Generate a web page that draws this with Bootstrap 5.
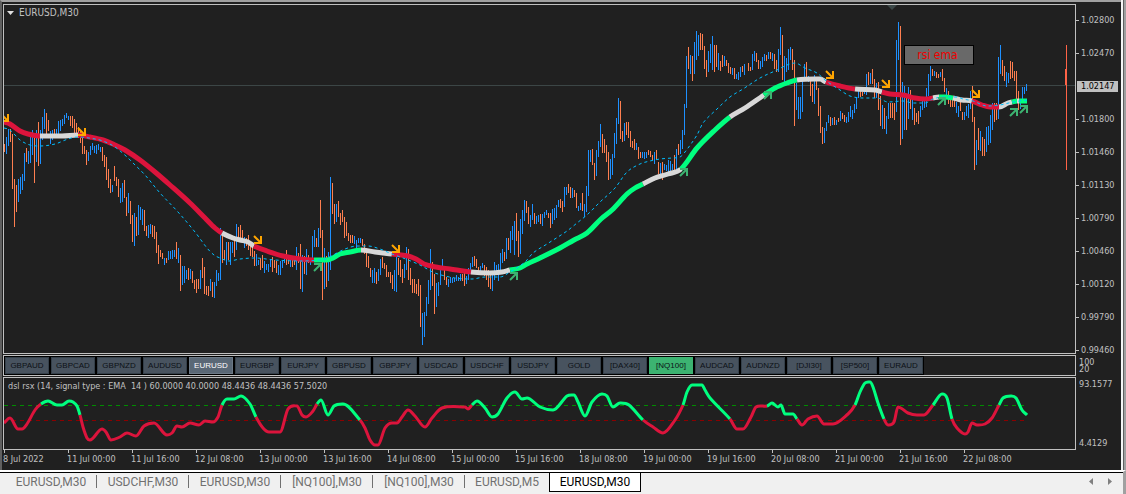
<!DOCTYPE html>
<html lang="en">
<head>
<meta charset="utf-8">
<meta name="viewport" content="width=device-width, initial-scale=1">
<title>EURUSD,M30</title>
<link href="https://cdn.jsdelivr.net/npm/bootstrap@5.3.0/dist/css/bootstrap.min.css" rel="stylesheet">
<style>
:root{--ink:#202020;--rule:#c0c0c0;--chrome:#a0a0a0}
body{background:#f0f0f0;font-family:"DejaVu Sans Condensed","DejaVu Sans",sans-serif;font-size:9px;line-height:11px;color:var(--rule)}
.workspace{min-width:0;background:var(--ink);border-top:2px solid var(--chrome);border-left:2px solid #606060;padding:2px 0 0 1px}
.edge{width:5px;background:linear-gradient(90deg,#f6f6f6 2px,#606060 2px,#606060 3px,var(--chrome) 3px)}
.pane{border:1px solid var(--rule);min-width:0}
.chart{display:block;width:100%}
.pane-main .chart{height:348px}
.pane-rsi .chart{height:71px}
.mt-line{margin-top:1px}
.scale{width:45px;flex:none}
.pane-title{top:2px;left:3px;gap:5px;font-size:10px}
.pane-note{top:3px;left:4px;white-space:pre}
.caret{width:7px;height:4px;flex:none}
.prices{padding-top:11px;margin:0 0 -2px}
.prices li{height:11px;padding-left:5px;background:linear-gradient(var(--rule),var(--rule)) 0 5px/3px 1px no-repeat}
.prices li.now{background:var(--rule);color:#000;margin-left:1px;margin-right:3px;padding-left:4px}
.pairs-pane{height:21px}
.pairs{background:#000;padding:1px;gap:2px}
.btn-pair{width:44px;height:17px;padding:0;border:1px solid #35404a;border-radius:0;background:#48535f;color:#0c1116;font:8px/14px "Liberation Sans",Arial,sans-serif}
.btn-pair.on{background:#5a6876;border-color:#6c7986;color:#fff}
.btn-pair.hot{background:#3cb371;border-color:#3cb371;color:#0c1116}
.btn-note{top:40px;right:101px;width:70px;height:20px;padding:0 3px 0 0;border:1px solid #000;border-radius:0;background:#696969;color:#f00000;font-size:12px;line-height:18px}
.small-scale{line-height:7px;padding:4px 0 0 3px}
.rsi-scale{padding:2px 0 1px 3px}
.times{display:grid;grid-template-columns:repeat(16,5.965%);height:20px;margin-right:45px}
.times span{white-space:nowrap;padding-top:4px;background:linear-gradient(var(--rule),var(--rule)) 1px 0/1px 3px no-repeat}
.tabwrap{border-top:2px solid #fff;border-right:3px solid var(--chrome)}
.tabbar{border-top:1px solid #000;height:22px;padding-left:5px;font-family:Roboto,"Open Sans",sans-serif;font-size:12px;line-height:18px}
.tab-chart{width:92px;height:19px;text-align:center;color:#707070;background:linear-gradient(#707070,#707070) 100% 2px/1px 13px no-repeat;text-decoration:none}
.tab-short{width:84px;background:none}
.tab-chart.on{background:#fff;color:#000;border:solid #000;border-width:0 1px 1px}
.tab-step{width:19px;height:17px;padding:0;border:0;background:none;line-height:0}
</style>
</head>
<body class="min-vh-100 d-flex flex-column">
<div class="d-flex">
  <main class="workspace flex-grow-1 d-flex flex-column">
    <div class="d-flex">
      <section class="pane pane-main flex-grow-1 position-relative">
        <svg id="priceChart" class="chart" viewBox="4 5 1071 348" preserveAspectRatio="none" role="img" aria-label="EURUSD price chart">
          <path d="M4 85.5H1075" stroke="#3c4646"/>
          <path d="M887 5h10l-5 5z" fill="#3c4848"/>
        </svg>
        <div class="pane-title position-absolute d-flex align-items-center">
          <svg class="caret" viewBox="0 0 7 4" aria-hidden="true"><path d="M0 0h7L3.5 4z" fill="#e0e0e0"/></svg>
          <span>EURUSD,M30</span>
        </div>
        <button type="button" class="btn btn-note position-absolute">rsi ema</button>
      </section>
      <ul class="scale prices list-unstyled d-flex flex-column justify-content-between">
        <li>1.02800</li><li>1.02470</li><li class="now">1.02147</li><li>1.01800</li><li>1.01460</li><li>1.01130</li><li>1.00790</li><li>1.00460</li><li>1.00120</li><li>0.99790</li><li>0.99460</li>
      </ul>
    </div>
    <div class="d-flex mt-line">
      <div class="pane pairs-pane flex-grow-1 d-flex">
        <div class="pairs d-flex" role="group" aria-label="Symbols">
          <button type="button" class="btn btn-pair">GBPAUD</button><button type="button" class="btn btn-pair">GBPCAD</button><button type="button" class="btn btn-pair">GBPNZD</button><button type="button" class="btn btn-pair">AUDUSD</button><button type="button" class="btn btn-pair on">EURUSD</button><button type="button" class="btn btn-pair">EURGBP</button><button type="button" class="btn btn-pair">EURJPY</button><button type="button" class="btn btn-pair">GBPUSD</button><button type="button" class="btn btn-pair">GBPJPY</button><button type="button" class="btn btn-pair">USDCAD</button><button type="button" class="btn btn-pair">USDCHF</button><button type="button" class="btn btn-pair">USDJPY</button><button type="button" class="btn btn-pair">GOLD</button><button type="button" class="btn btn-pair">[DAX40]</button><button type="button" class="btn btn-pair hot">[NQ100]</button><button type="button" class="btn btn-pair">AUDCAD</button><button type="button" class="btn btn-pair">AUDNZD</button><button type="button" class="btn btn-pair">[DJI30]</button><button type="button" class="btn btn-pair">[SP500]</button><button type="button" class="btn btn-pair">EURAUD</button>
        </div>
      </div>
      <div class="scale small-scale"><div>100</div><div>20</div></div>
    </div>
    <div class="d-flex mt-line">
      <section class="pane pane-rsi flex-grow-1 position-relative">
        <svg id="rsiChart" class="chart" viewBox="4 378 1071 71" preserveAspectRatio="none" role="img" aria-label="dsl rsx indicator">
          <path d="M4 405.5H1027" stroke="#008c00" stroke-dasharray="4 4"/>
          <path d="M4 420.5H1027" stroke="#8b0000" stroke-dasharray="4 4"/>
        </svg>
        <div class="pane-note position-absolute">dsl rsx (14, signal type : EMA  14 ) 60.0000 40.0000 48.4436 48.4436 57.5020</div>
      </section>
      <div class="scale rsi-scale d-flex flex-column justify-content-between"><span>93.1577</span><span>4.4129</span></div>
    </div>
    <div class="times">
      <span>8 Jul 2022</span><span>11 Jul 00:00</span><span>11 Jul 16:00</span><span>12 Jul 08:00</span><span>13 Jul 00:00</span><span>13 Jul 16:00</span><span>14 Jul 08:00</span><span>15 Jul 00:00</span><span>15 Jul 16:00</span><span>18 Jul 08:00</span><span>19 Jul 00:00</span><span>19 Jul 16:00</span><span>20 Jul 08:00</span><span>21 Jul 00:00</span><span>21 Jul 16:00</span><span>22 Jul 08:00</span>
    </div>
  </main>
  <div class="edge flex-shrink-0"></div>
</div>
<div class="tabwrap flex-grow-1">
  <nav class="tabbar d-flex" aria-label="Open charts">
    <a href="#" class="tab-chart">EURUSD,M30</a><a href="#" class="tab-chart">USDCHF,M30</a><a href="#" class="tab-chart">EURUSD,M30</a><a href="#" class="tab-chart">[NQ100],M30</a><a href="#" class="tab-chart">[NQ100],M30</a><a href="#" class="tab-chart tab-short">EURUSD,M5</a><a href="#" class="tab-chart on" aria-current="page">EURUSD,M30</a>
    <div class="ms-auto d-flex">
      <button type="button" class="tab-step" aria-label="Previous charts"><svg width="4" height="7" viewBox="0 0 4 7"><path d="M4 0v7L0 3.5z" fill="#808080"/></svg></button>
      <button type="button" class="tab-step me-1" aria-label="Next charts"><svg width="4" height="7" viewBox="0 0 4 7"><path d="M0 0v7l4-3.5z" fill="#808080"/></svg></button>
    </div>
  </nav>
</div>
<script src="https://cdn.jsdelivr.net/npm/bootstrap@5.3.0/dist/js/bootstrap.bundle.min.js"></script>
<script>
// Price bars, two pixels apart, in runs: start x, then direction (b up, o down) with high-low.
const runs = {
 4:"o144-152 b137-154 b129-146 o129-142 o134-189 o179-227 o185-212 b179-202 b177-194 b174-190 b153-181 o148-162 b151-164 b135-163 b130-155 o137-183 b130-162 o122-166 b130-164 b117-140 b109-129 o113-134 o120-131 b131-144 b130-140 o129-136 b129-134 b121-136 b120-131 b119-126 b115-124 b113-118 b116-120 o116-126 o116-128 o119-133 o123-134 o127-138 o131-143 o138-154 o146-154 o150-165 b152-161 b146-155 b143-150 b146-153 b145-154 b144-150 b147-152 o147-161 o155-167 o157-180 o169-188 o179-193 b185-192 o166-181 o177-186 o179-197",
 120:"b188-203 b183-202 o180-198 o197-216 b193-213 o201-224 o215-242 b213-246 o217-236 b205-235 b207-220 b209-225 o210-231 o226-236 b225-238 b224-234 o225-237 o226-239 o232-253 o245-264 o250-257 o253-259 b258-265 o258-263 b251-260 b251-259 b250-259 b250-257 o242-259 b248-263 o255-291 b266-285 b266-283 b270-279 o268-280 b269-279 o271-283 o280-289 o279-293 o279-289",
 200:"b270-289 o258-278 o267-294 o286-295 o286-296 b279-291 o282-297 b282-298 b270-286 b273-281 b228-280 o235-263 o250-260 b242-265 o242-260 b242-265 b242-253 o236-257 b224-250 o227-238 o225-240 o230-238 b237-248 o238-246 o235-250 o243-256 o247-257 o251-266 b254-266 b260-265 o258-270 o255-268 b261-273 b264-270 b264-272 b259-267 o257-272 o260-268 o261-273 b265-275 b261-275 b261-268 b258-263 o250-265 o258-264 b258-267 o259-267 o258-265 b247-270 o253-263 o244-289 b255-292 o256-274 b249-275 o255-263 b258-265 b236-260 b230-247 o238-247 b228-247 o200-238 o230-300 b248-289 o256-287 b252-281 b177-270 o183-214 o204-224 b204-222 o201-217 o213-225 o210-222 o217-238 o222-236 o233-241 o235-243 o235-243 b236-244 b240-248 b238-243 b238-243 o239-246 o244-254 o253-267 o256-268 o268-277 b270-283 b268-283 o272-284 b269-281 b259-275 o257-268 o263-269 o265-277 o272-277 o272-283 o275-289 b270-291 b256-292 o258-275",
 400:"o260-277 o269-283 b264-278 b247-270 o249-280 o268-285 o279-293 o279-293 o284-294 o279-296 o285-327 b313-345 b312-337 b297-316 b280-304 b249-290 o262-286 o274-314 b283-307 b282-296 b270-285 b259-268 o267-280 o277-285 b279-287 b277-283 b278-283 b278-282 b275-281 b277-281 b274-281 o274-281 o271-286 b276-284 b268-280 b263-274 b257-267 o256-266 o259-268 o267-272 b266-275 b263-268 o265-276 o267-280 o270-287 o274-289 b274-291 b262-280 b265-273 b264-281 b253-271 b249-263 o252-261 b238-259 o238-250 b231-253 b226-240 b221-255 o213-241 o231-257 b219-254 b210-234 b200-221 o201-213 o207-224 b215-227 b204-220 o213-224 b216-224 b215-222 o214-224 b214-226 b212-218 b210-215 o213-218 o213-228 b209-224 b208-220 b205-218 b200-207",
 560:"o199-208 o201-212 b187-207 b187-195 o184-193 o187-198 b188-198 o190-197 o193-208 b206-211 b203-210 o193-211 b204-217 b186-212 b150-196 b150-162 o149-165 o163-180 b150-176 b141-157 b124-147 o134-153 o139-153 o145-162 o152-180 b159-179 b154-175 b133-158 b118-144 b98-124 o101-139 o131-142 b123-141 o122-135 o122-138 o131-147 o141-148 o139-150 b143-150 o147-159 o152-158 b152-158 b152-159 b152-158 o150-155 o151-157 o155-160 b152-164 o150-160 o162-174 b163-174 o162-180 b164-170 b165-171 b160-172 b161-171 b164-170 o155-171 b149-170 o144-155 b140-154 b130-149 b104-135 b56-108 o47-69 b55-74 o56-81 b42-74 b31-60 b35-56 o33-50 o34-50 o46-69 o60-77 b51-72 b44-63 b36-70 o45-72 o45-67 b53-70 o61-71 o55-67 b56-66 o60-66 o63-73 o67-74 b68-75 o68-79 b74-79 b72-80 b67-77 o66-72 b64-75",
 748:"o63-71 o67-71 b54-70 b51-61 o53-62 o60-69",
 760:"b61-69 b57-67 b54-61 o55-61 b52-59 o52-59 b53-61 o54-69 o60-72 b49-72 b27-55 o35-80 b56-83 b58-72 b49-70 b47-60 o49-70 o60-126 b83-110 b97-119 b97-119 b77-112 b64-81 o62-78 b76-82 o77-96 o84-102 b75-104 o80-90 o88-116 o106-133 o127-144 b128-143 b122-131 b115-123 o117-126 b118-125 o117-125 b120-125 o118-122 b111-121 o113-119 o115-122 b117-123 b112-122 b106-117 b110-119 b104-113 b98-109 b90-98 o88-97 o92-96 b87-94 b74-95 o72-85 b73-84 o69-84 o79-98 b83-98 o82-110 o96-126 b105-129 o108-129 b116-134 b103-119 o103-118 o103-118 o103-120 b40-112 b22-60 o26-145 b82-139 b86-130 o96-130 b87-119 o90-109 b98-120 o108-125 o113-122 o111-124",
 920:"b106-117 b101-110 b97-108 b88-107 b74-96 b66-81 o69-76 b71-76 o72-78 o74-78 b72-77 o69-81 o78-92 b88-96 o91-104 o97-107 o98-107 o99-107 b102-113 b106-117 o99-111 o112-120 b112-120 b106-116 b104-118 b91-109 o86-122 o117-170 b140-165 o128-150 b131-151 o137-156 o139-156 b127-152 b126-145 b115-143 b103-130 o103-122 o103-120 b57-119 b45-74 o60-76 o66-81 b72-87 b73-83 o61-79 o62-78 o71-81 o71-100 o91-110 b100-109 b87-102 b87-94 b84-91"
};
const R="#dc143c",G="#00ff7f",W="#d8d8d8";
// Moving average and oscillator: coloured runs that share their end points.
const average=[
 [R,"4,122 10,124 20,131 28,134 40,136"],[W,"40,136 62,136 78,135"],
 [R,"78,135 90,137 103,140 115,145 125,150 140,160 155,172 170,185 190,203 205,218 215,228 222,233"],
 [W,"222,233 233,238 240,240 248,242 254,246"],[R,"254,246 267,251 283,256 300,259 314,260"],
 [G,"314,260 320,260 327,260 333,258 340,254 350,252 361,250"],[W,"361,250 375,252 392,254"],
 [R,"392,254 408,256 416,259 424,264 436,267 450,269 471,272"],[W,"471,272 490,273 502,272 510,270"],
 [G,"510,270 520,268 527,264 540,258 560,248 574,240 587,233 601,219 612,210 627,194 635,188 643,184"],
 [W,"643,184 655,178 668,174 681,169"],[G,"681,169 697,148 715,130 730,117"],[W,"730,117 745,108 764,95"],
 [G,"764,95 775,88 787,83 797,80"],[W,"797,80 815,79 820,79 826,82"],[R,"826,82 840,86 855,89"],
 [W,"855,89 875,90 882,92"],[R,"882,92 890,94 903,95 915,98 925,99 933,98"],[W,"933,98 939,97"],
 [G,"939,97 945,97 953,98"],[W,"953,98 962,100 972,101"],[R,"972,101 982,105 990,107 999,107"],
 [W,"999,107 1008,103 1012,102"],[G,"1012,102 1017,101"],[W,"1017,101 1019,101"],[G,"1019,101 1027,101"]];
const slow=[["#00bfff","4,128 10,130 20,140 30,145 40,146 55,144 68,139 78,137 95,139 103,141 115,147 127,157 133,163 145,175 160,193 178,212 195,232 207,248 214,255 220,258 229,261 240,259 255,258 275,260 300,261 325,259 335,254 345,249 357,246 368,246 380,249 392,254 403,258 420,265 435,273 455,278 472,279 485,277 500,277 510,272 525,262 533,253 547,244 567,231 577,223 588,214 600,202 615,188 627,172 640,164 650,161 660,159 672,158 680,157 685,152 697,135 703,123 717,109 730,97 743,89 760,78 777,70 787,65 795,63 805,68 817,73 825,80 840,90 850,96 863,98 877,98 888,102 903,101 913,103 925,103 933,99 943,97 957,97 963,99 973,101 987,106 1000,105 1013,102 1027,100"]];
const rsi=[
 [R,"4,423 10,418 18,429 22,429 27,424 35,410 41,404"],[G,"41,404 48,401 57,405 62,405 69,401 73,402 77,406 80,415"],
 [R,"80,415 83,427 87,438 90,440 102,429 106,432 111,440 120,437 127,433 136,436 144,426 154,423 167,435 172,433 177,426 182,427 190,423 199,425 205,421 213,422 218,417 222,405"],
 [G,"222,405 227,399 234,399 241,396 250,404 256,417"],[R,"256,417 263,428 269,432 280,432 288,409 297,406 302,415 306,417 313,411 317,404"],
 [G,"317,404 321,400 328,415 334,406 343,404 360,420"],
 [R,"360,420 365,428 370,440 375,445 378,445 385,428 392,423 397,423 402,417 408,410 415,416 425,427 432,418 442,408 465,407 468,409 472,405"],
 [G,"472,405 477,401 485,408 492,417 498,414 507,398 515,392 522,399 527,398 540,407 553,410 567,396 574,395 578,402 585,416 592,402 602,394 607,396 613,407 620,403 629,405 643,420"],
 [R,"643,420 653,427 663,433 675,420 683,405"],[G,"683,405 687,392 692,385 702,385 705,390 710,398 730,419"],
 [R,"730,419 737,429 743,429 751,417 756,407 767,406"],[G,"767,406 772,403 778,407 781,405 785,414 793,414 797,419"],
 [R,"797,419 802,425 808,419 817,416 824,424 833,424 848,414 855,405"],[G,"855,405 860,392 865,383 870,382 873,387 878,403 884,419"],
 [R,"884,419 888,425 894,422 898,407 908,413 917,415 924,415 933,405"],[G,"933,405 942,394 947,398 952,419"],
 [R,"952,419 957,428 965,434 968,432 972,423 977,425 985,424 992,418 999,405"],[G,"999,405 1003,398 1011,396 1016,398 1022,410 1027,415"]];
const NS="http://www.w3.org/2000/svg";
function add(svg,d,attrs){
  const p=document.createElementNS(NS,"path");
  p.setAttribute("d",d);p.setAttribute("fill","none");
  for(const k in attrs)p.setAttribute(k,attrs[k]);
  svg.append(p);
}
// Draws the runs as one smooth curve, changing colour at each shared point.
function curve(svg,list,attrs){
  const pts=[],marks=[];
  for(const [colour,text] of list){
    const own=text.split(" ").map(p=>p.split(",").map(Number));
    if(pts.length)own.shift();
    const from=Math.max(pts.length-1,0);
    pts.push(...own);
    marks.push([colour,from,pts.length-1]);
  }
  const slope=i=>{
    const a=pts[Math.max(i-1,0)],c=pts[Math.min(i+1,pts.length-1)],b=pts[i];
    if(i&&i<pts.length-1&&(b[1]-a[1])*(c[1]-b[1])<=0)return 0;
    return (c[1]-a[1])/(c[0]-a[0]);
  };
  for(const [colour,from,to] of marks){
    let d=`M${pts[from]}`;
    for(let i=from;i<to;i++){
      const [x,y]=pts[i],[u,v]=pts[i+1],h=(u-x)/3;
      d+=`C${x+h},${y+slope(i)*h} ${u-h},${v-slope(i+1)*h} ${u},${v}`;
    }
    add(svg,d,{stroke:colour,...attrs});
  }
}
const price=document.getElementById("priceChart"), osc=document.getElementById("rsiChart");
const bars={b:"",o:""};
for(const start in runs)runs[start].split(" ").forEach((t,i)=>{
  const [hi,lo]=t.slice(1).split("-");
  bars[t[0]]+=`M${+start+2*i+.5} ${hi}V${lo}`;
});
add(price,bars.b,{stroke:"#1e90ff"});
add(price,bars.o,{stroke:"#ff7f50"});
add(price,"M1066.5 45V170M1065.5 69V85",{stroke:"#ff6347"});
curve(price,average,{"stroke-width":5});
curve(price,slow,{"stroke-dasharray":"3 3"});
curve(osc,rsi,{"stroke-width":3});
// Signal arrows: sell points down-right, buy points up-right.
for(const [x,y] of [[5,118],[82,132],[258,240],[396,249],[830,75],[886,84],[976,94]])
  add(price,`M${x-4} ${y-4}l6 6M${x+3} ${y-4}v7h-7`,{stroke:"#ffa500","stroke-width":2});
for(const [x,y] of [[318,267],[514,276],[684,172],[768,95],[942,101],[1014,112],[1024,109]])
  add(price,`M${x-4} ${y+4}l6-6M${x-4} ${y-3}h7v7`,{stroke:"#3cb371","stroke-width":2});
</script>
</body>
</html>
